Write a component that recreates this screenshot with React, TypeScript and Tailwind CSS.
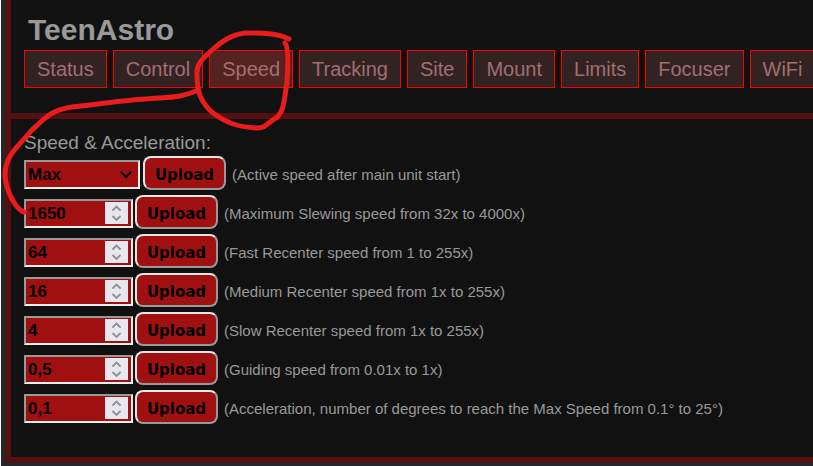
const tabs = ["Status", "Control", "Speed", "Tracking", "Site", "Mount", "Limits", "Focuser", "WiFi"];

const speeds = [
  { id: "max", value: "1650", hint: "(Maximum Slewing speed from 32x to 4000x)" },
  { id: "fast", value: "64", hint: "(Fast Recenter speed from 1 to 255x)" },
  { id: "medium", value: "16", hint: "(Medium Recenter speed from 1x to 255x)" },
  { id: "slow", value: "4", hint: "(Slow Recenter speed from 1x to 255x)" },
  { id: "guide", value: "0,5", hint: "(Guiding speed from 0.01x to 1x)" },
  { id: "accel", value: "0,1", hint: "(Acceleration, number of degrees to reach the Max Speed from 0.1° to 25°)" },
];

const field =
  "block h-[29px] appearance-none border-2 border-t-[#999] border-l-[#999] border-r-[#eee] border-b-[#eee] bg-[#a01010] pl-[2px] text-[17px] font-bold leading-[20px] text-black outline-none";

function UploadButton() {
  return (
    <button
      type="submit"
      className="h-[34px] w-[83px] shrink-0 rounded-[8px] border-2 border-t-[#e6e6e6] border-l-[#e6e6e6] border-r-[#999] border-b-[#999] bg-[#a01010] pt-[3px] font-['DejaVu_Sans',sans-serif] text-[15px] font-bold leading-[24px] text-black"
    >
      Upload
    </button>
  );
}

function Hint({ id, text }: { id: string; text: string }) {
  return (
    <label htmlFor={id} className="pt-[4px] text-[15px] leading-[20px]">
      {text}
    </label>
  );
}

function Spinner() {
  return (
    <span className="pointer-events-none absolute right-[5px] top-[3px] h-[22px] w-[23px] bg-[#e9e7ee]">
      <svg viewBox="0 0 23 22" fill="none" stroke="#8f8f9d" strokeWidth="1.8" strokeLinecap="round" aria-hidden="true">
        <path d="M8 8L11.5 4.5L15 8M8 14.5L11.5 18L15 14.5" />
      </svg>
    </span>
  );
}

// hand-drawn marker strokes over the page
function Annotation() {
  return (
    <svg
      className="pointer-events-none absolute -left-px top-0 h-[220px] w-[300px]"
      viewBox="0 0 300 220"
      fill="none"
      stroke="#e81c1c"
      strokeWidth="5"
      strokeLinecap="round"
      strokeLinejoin="round"
      aria-hidden="true"
    >
      <path d="M289 39C277 33 262 33 245 33C231 35 222 41 211 51C202 59 196 65 197 75C197 92 201 103 213 113C225 122 237 127 256 128C267 128 268 122 276 118C284 112 284 101 287 82C288 67 289 47 285 43" />
      <path d="M196 91C184 96 177 97 160 98C133 99 107 103 72 107C51 110 45 118 31 131C19 146 5 155 5 175C6 193 17 210 24 212" />
    </svg>
  );
}

export default function App() {
  return (
    <div className="relative min-h-screen overflow-hidden border-l border-white bg-[#24272c] pb-[3px] pl-1 font-['Liberation_Sans',Arial,sans-serif] text-[#999]">
      <header className="-mr-[6px] border-x-[6px] border-b-[6px] border-[#551111] bg-[#111] pb-[25px] pl-[13px] pt-[10px]">
        <h1 className="pl-1 text-[30px] font-bold leading-[40px]">TeenAstro</h1>
        <nav className="flex gap-[6px]">
          {tabs.map((tab) => (
            <a
              key={tab}
              href={`#${tab.toLowerCase()}`}
              className={`shrink-0 border border-[#ff0000] px-3 py-[6px] text-[20px] leading-[24px] text-[#a07070] ${
                tab === "Speed" ? "bg-[#552222]" : "bg-[#332222]"
              }`}
            >
              {tab}
            </a>
          ))}
        </nav>
      </header>

      <main className="-mr-[6px] border-x-[6px] border-b-[6px] border-[#551111] bg-[#111] pb-[28px] pl-[13px] pt-[12px]">
        <h2 className="pb-[2px] text-[19px] leading-[23px]">Speed &amp; Acceleration:</h2>
        <form className="flex items-center pb-[5px]">
          <div className="relative mt-[3px]">
            <select id="active" defaultValue="Max" className={`${field} w-[116px]`}>
              <option>Guide</option>
              <option>Slow</option>
              <option>Medium</option>
              <option>Fast</option>
              <option>Max</option>
            </select>
            <svg
              className="pointer-events-none absolute right-[8px] top-[11px] h-[8px] w-[12px]"
              viewBox="0 0 12 8"
              fill="none"
              stroke="black"
              strokeWidth="2"
              strokeLinecap="round"
              aria-hidden="true"
            >
              <path d="M1.5 1.5L6 6L10.5 1.5" />
            </svg>
          </div>
          <div className="flex items-center gap-[6px] pl-[3px]">
            <UploadButton />
            <Hint id="active" text="(Active speed after main unit start)" />
          </div>
        </form>
        {speeds.map((speed) => (
          <form key={speed.id} className="flex items-center pb-[5px]">
            <div className="relative mt-[3px]">
              <input
                id={speed.id}
                type="text"
                inputMode="decimal"
                defaultValue={speed.value}
                className={`${field} w-[109px]`}
              />
              <Spinner />
            </div>
            <div className="flex items-center gap-[6px] pl-[2px]">
              <UploadButton />
              <Hint id={speed.id} text={speed.hint} />
            </div>
          </form>
        ))}
      </main>
      <Annotation />
    </div>
  );
}
